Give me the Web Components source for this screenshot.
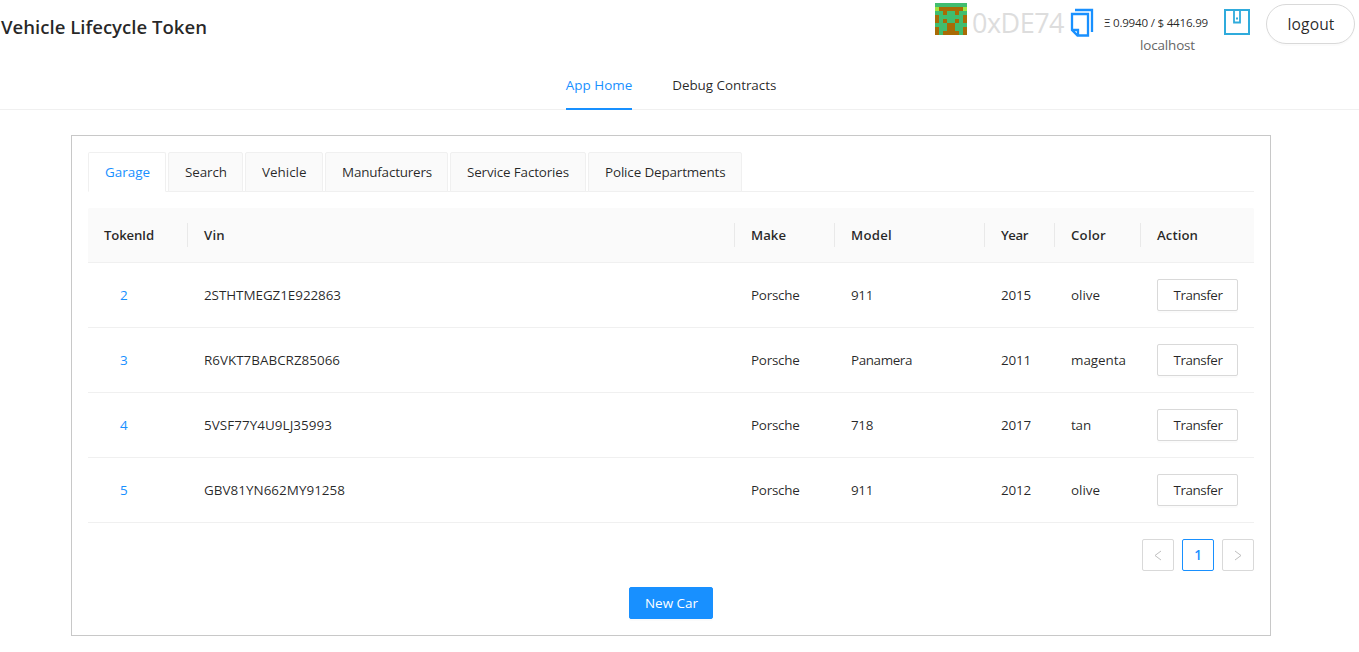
<!DOCTYPE html>
<html lang="en"><head><meta charset="utf-8"><title>Vehicle Lifecycle Token</title>
<style>html,body{margin:0;height:100%;overflow:hidden;background:#fff}body{font:13.45px/22px "Open Sans","Noto Sans",sans-serif;color:rgba(0,0,0,.85)}</style></head>
<body><vehicle-app></vehicle-app>
<script>
const define=(name,html,setup)=>customElements.define(name,class extends HTMLElement{
  connectedCallback(){ if(this.shadowRoot)return; const t=document.createElement('template');t.innerHTML=html;
    this.attachShadow({mode:'open'}).append(t.content.cloneNode(true)); if(setup)setup(this,this.shadowRoot); }
});
// Label whose tracking is adjusted to fill the width given in its "w" attribute.
define('fit-text','<style>:host{display:inline-block;white-space:pre}span{display:inline-block}</style><span><slot></slot></span>',(el,root)=>{
  const w=+el.getAttribute('w'),s=root.querySelector('span');
  const n=el.textContent.length,nat=s.getBoundingClientRect().width;
  s.style.letterSpacing=((w-nat)/n)+'px'; el.style.width=w+'px';
});
define('block-avatar','<style>:host{display:block;width:32px;height:32px}svg{display:block}</style><svg width="32" height="32" viewBox="0 0 8 8" shape-rendering="crispEdges"></svg>',(el,root)=>{
  const rows=['GGGGGGGG','LBBBBBBL','GGBGGBGG','BGGBBGGB','BGBGGBGB','GGGBBGGG','BGGBBGGB','BGBBBBGB'];
  const c={G:'#40bd6f',L:'#a2e43f',B:'#a96b05'};
  rows[3]='BGGGGGGB';
  root.querySelector('svg').innerHTML=rows.map((r,y)=>[...r].map((k,x)=>`<rect x="${x}" y="${y}" width="1" height="1" fill="${c[k]}"/>`).join('')).join('');
});
define('account-bar',`<style>
:host{display:flex;align-items:flex-start;width:424px;height:60px;color:rgba(0,0,0,.85)}
block-avatar{margin:3px 5px 0 0}
.addr{font-size:27px;line-height:40px;color:#ddd;width:92px;margin-top:3px}
.copy{margin:8px 0 0 6px;width:24px;height:30px}
.mid{display:flex;flex-direction:column;width:105px;margin-left:10px;padding-top:12px;align-items:flex-start}
.bal{font-size:11.6px;line-height:22px;height:22px}.net{color:#666;line-height:22px;margin-left:36px}
.wallet{margin:9px 0 0 15px;width:26px;height:26px}
button{margin:4px 0 0 16px;width:89px;height:40px;border:1px solid #d9d9d9;border-radius:20px;background:#fff;padding:0 0 0 1px;font:15.6px/38px "Open Sans",sans-serif;color:rgba(0,0,0,.85);box-shadow:0 2px 0 rgba(0,0,0,.015)}
svg{display:block}</style>
<block-avatar></block-avatar><div class="addr"><fit-text w="92">0xDE74</fit-text></div>
<svg class="copy" viewBox="0 0 24 30" fill="none" stroke="#1890ff" stroke-width="2.3"><path d="M5 2H22V24M2 6H18V27.5H7.5L2 22ZM2.5 22H8V27"/></svg>
<div class="mid"><div class="bal"><fit-text w="104">Ξ 0.9940 / $ 4416.99</fit-text></div><div class="net"><fit-text w="55">localhost</fit-text></div></div>
<svg class="wallet" viewBox="0 0 26 26" fill="none" stroke="#2fabdc" stroke-width="2"><path d="M1 1H25V25H1Z" /><path d="M10 2V13.5H16V2" stroke-width="1.8"/><path d="M12 9.5H14" stroke-width="2"/></svg>
<button><fit-text w="47">logout</fit-text></button>`);
define('app-header',`<style>:host{display:flex;justify-content:space-between;height:60px}
h1{margin:0;padding:11px 0 0 1px;font:600 18.6px/32px "Open Sans",sans-serif;color:rgba(0,0,0,.85)}</style>
<h1><fit-text w="206">Vehicle Lifecycle Token</fit-text></h1><account-bar></account-bar>`);
define('main-nav',`<style>:host{display:flex;height:49px;border-bottom:1px solid #f0f0f0;justify-content:center;gap:40px;padding-right:17px}
div{height:36px;padding-top:14px}.on{color:#1890ff;border-bottom:2px solid #1890ff;height:34px}</style>
<div class="on"><fit-text w="66.5">App Home</fit-text></div><div><fit-text w="104">Debug Contracts</fit-text></div>`);
define('card-tab',`<style>:host{box-sizing:border-box;height:40px;border:1px solid #f0f0f0;background:#fafafa;border-radius:2px 2px 0 0;padding:8px 0 0 16px}
:host([active]){background:#fff;color:#1890ff;border-bottom-color:#fff}</style><slot></slot>`);
define('card-tabs',`<style>:host{display:grid;grid-template-columns:78px 75px 78px 123px 136px 154px;column-gap:2px;height:39px;border-bottom:1px solid #f0f0f0;margin-bottom:16px}</style>
<card-tab active><fit-text w="45">Garage</fit-text></card-tab><card-tab><fit-text w="42">Search</fit-text></card-tab><card-tab><fit-text w="44.5">Vehicle</fit-text></card-tab><card-tab><fit-text w="90">Manufacturers</fit-text></card-tab><card-tab><fit-text w="102">Service Factories</fit-text></card-tab><card-tab><fit-text w="120.5">Police Departments</fit-text></card-tab>`);
define('ui-button',`<style>:host{display:block;width:81px}button{box-sizing:border-box;display:block;width:100%;height:32px;padding:0 0 0 1px;border:1px solid #d9d9d9;border-radius:2px;background:#fff;color:inherit;font:inherit;line-height:28px;box-shadow:0 2px 0 rgba(0,0,0,.015)}
:host([primary]){width:84px}:host([primary]) button{background:#1890ff;border-color:#1890ff;color:#fff}</style><button><slot></slot></button>`);
const columns='100px 547px 100px 150px 70px 86px 113px';
define('vehicle-head',`<style>:host{display:grid;grid-template-columns:${columns};height:54px;border-bottom:1px solid #f0f0f0;background:#fafafa;align-items:center;font-weight:600;font-size:13.2px;border-radius:2px 2px 0 0}
div{height:24px;box-sizing:border-box;line-height:24px;padding-left:16px;border-right:1px solid #e9e9e9}div:last-child{border:0}</style>
${[['TokenId',50],['Vin',21],['Make',35],['Model',41],['Year',27],['Color',35],['Action',41]].map(([t,w])=>`<div><fit-text w="${w}">${t}</fit-text></div>`).join('')}`);
define('vehicle-row',`<style>:host{display:grid;grid-template-columns:${columns};height:64px;border-bottom:1px solid #f0f0f0;align-items:center}
div{padding-left:16px}.id{padding-left:32px;color:#1890ff}</style><div class="id"></div><div class="vin"></div><div class="make"><fit-text w="48.5">Porsche</fit-text></div><div class="model"></div><div class="year"></div><div class="color"></div><div><ui-button><fit-text w="49">Transfer</fit-text></ui-button></div>`,(el,r)=>{
  for(const k of ['id','vin','model','year','color']){
    const [t,w]=el.getAttribute('data-'+k).split('|');r.querySelector('.'+k).innerHTML=`<fit-text w="${w}">${t}</fit-text>`;
  }
});
define('page-nav',`<style>:host{display:flex;justify-content:flex-end;gap:8px;margin:16px 0}
div{box-sizing:border-box;width:32px;height:32px;border:1px solid #d9d9d9;border-radius:2px;display:flex;align-items:center;justify-content:center}.on{color:#1890ff;border-color:#1890ff;font-weight:600;padding-bottom:1px}</style>
<div><svg width="12" height="12" fill="none" stroke="#bfbfbf"><path d="M9 2 3 6.5 9 11"/></svg></div><div class="on">1</div><div><svg width="12" height="12" fill="none" stroke="#bfbfbf"><path d="M3 2 9 6.5 3 11"/></svg></div>`);
define('vehicle-app',`<style>:host{display:block}.card{box-sizing:border-box;width:1200px;height:501px;margin:25px 0 0 71px;border:1px solid #c8c8c8;padding:16px}
.foot{display:flex;justify-content:center}</style>
<app-header></app-header><main-nav></main-nav><div class="card"><card-tabs></card-tabs><vehicle-head></vehicle-head>
<vehicle-row data-id="2|8" data-vin="2STHTMEGZ1E922863|137" data-model="911|22" data-year="2015|30" data-color="olive|29"></vehicle-row>
<vehicle-row data-id="3|8" data-vin="R6VKT7BABCRZ85066|136" data-model="Panamera|61" data-year="2011|30" data-color="magenta|55"></vehicle-row>
<vehicle-row data-id="4|8" data-vin="5VSF77Y4U9LJ35993|128" data-model="718|22" data-year="2017|30" data-color="tan|20"></vehicle-row>
<vehicle-row data-id="5|8" data-vin="GBV81YN662MY91258|141" data-model="911|22" data-year="2012|30" data-color="olive|29"></vehicle-row>
<page-nav></page-nav><div class="foot"><ui-button primary><fit-text w="53">New Car</fit-text></ui-button></div></div>`);
</script></body></html>
